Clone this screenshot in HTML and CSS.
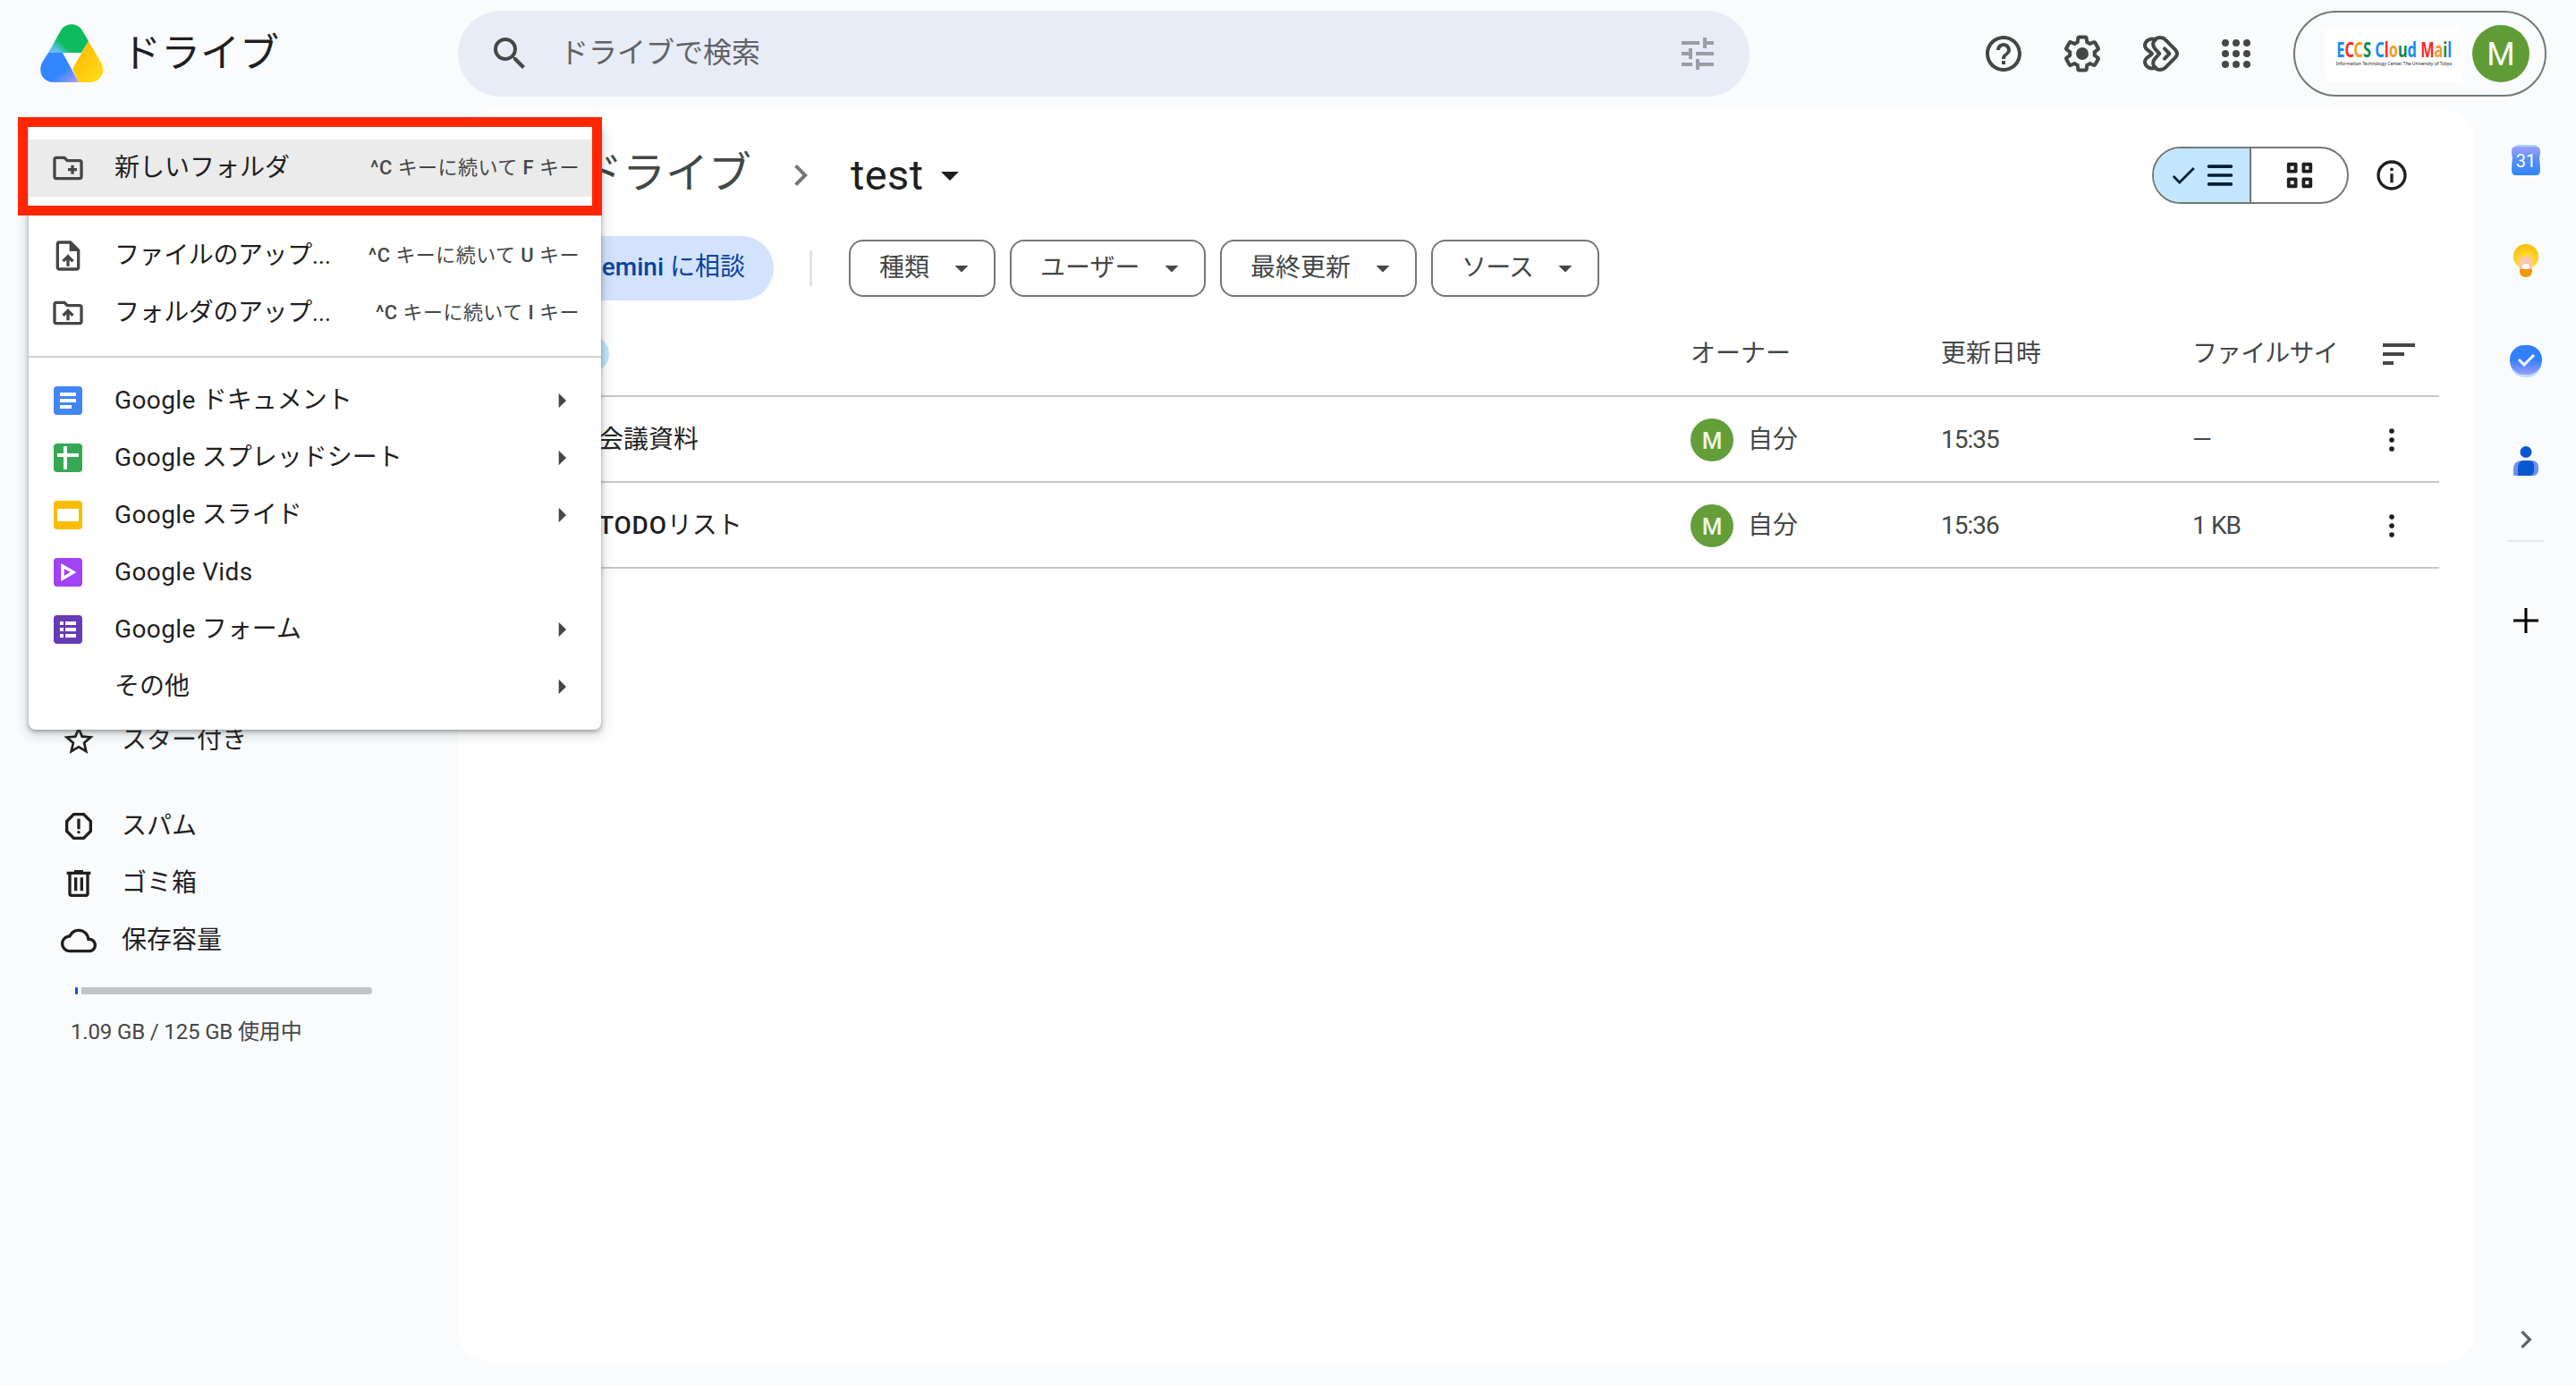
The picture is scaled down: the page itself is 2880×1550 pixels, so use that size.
FILE: index.html
```html
<!DOCTYPE html>
<html lang="ja">
<head>
<meta charset="UTF-8">
<title>test - ドライブ</title>
<link rel="stylesheet" href="styles.css">
</head>
<body>

<header class="topbar">
  <div class="brand">
    <svg class="brand-logo" viewBox="0 0 70 66">
      <defs>
        <linearGradient id="gBlue" x1="0" y1="0" x2="1" y2="1">
          <stop offset="0.6" stop-color="#3186ff"/>
          <stop offset="1" stop-color="#b0a0f5"/>
        </linearGradient>
        <linearGradient id="gGreen" x1="0" y1="1" x2="0.5" y2="0.6">
          <stop offset="0" stop-color="#6fb5ff"/>
          <stop offset="0.35" stop-color="#5cc0e8"/>
          <stop offset="0.75" stop-color="#0ebc5f"/>
        </linearGradient>
        <linearGradient id="gYellow" x1="0" y1="0" x2="1" y2="1">
          <stop offset="0.3" stop-color="#ffc107"/>
          <stop offset="1" stop-color="#ffdf1c"/>
        </linearGradient>
      </defs>
      <path fill="url(#gGreen)" d="M9 32 23 7C28-2 42-2 47 7L54 19 46 32z"/>
      <path fill="url(#gYellow)" d="M54 19 68 43C74 54 67 65 55 65H43L36 50z"/>
      <path fill="url(#gBlue)" d="M9 32H25L43 65H15C3 65-3 54 2 43z"/>
    </svg>
    <span class="brand-name">ドライブ</span>
  </div>

  <div class="search">
    <svg class="icon48 dark" viewBox="0 0 24 24"><path d="M15.5 14h-.79l-.28-.27A6.471 6.471 0 0 0 16 9.5 6.5 6.5 0 1 0 9.500 16c1.610 0 3.090-.59 4.230-1.570l.27.28v.79l5 4.990L20.490 19l-4.990-5zm-6 0C7.010 14 5 11.990 5 9.500S7.010 5 9.500 5 14 7.010 14 9.500 11.990 14 9.500 14z"/></svg>
    <span class="search-hint">ドライブで検索</span>
    <svg class="icon48 faded" viewBox="0 0 24 24"><path d="M3 17v2h6v-2H3zM3 5v2h10V5H3zm10 16v-2h8v-2h-8v-2h-2v6h2zM7 9v2H3v2h4v2h2V9H7zm14 4v-2H11v2h10zm-6-4h2V7h4V5h-4V3h-2v6z"/></svg>
  </div>

  <div class="tools">
    <svg class="icon48 dark" viewBox="0 0 24 24"><path d="M11 18h2v-2h-2v2zm1-16C6.480 2 2 6.480 2 12s4.480 10 10 10 10-4.480 10-10S17.520 2 12 2zm0 18c-4.410 0-8-3.590-8-8s3.590-8 8-8 8 3.590 8 8-3.590 8-8 8zm0-14c-2.210 0-4 1.790-4 4h2c0-1.100.9-2 2-2s2 .9 2 2c0 2-3 1.750-3 5h2c0-2.250 3-2.500 3-5 0-2.210-1.790-4-4-4z"/></svg>
    <svg class="icon48 dark" viewBox="0 0 24 24"><path d="M13.850 22.250h-3.700c-.74 0-1.360-.54-1.450-1.270l-.27-1.890c-.27-.14-.53-.29-.79-.46l-1.800.72c-.7.26-1.470-.03-1.810-.65L2.200 15.530c-.35-.66-.2-1.440.36-1.880l1.530-1.190c-.01-.15-.02-.3-.02-.46 0-.15.01-.31.02-.46l-1.520-1.190c-.59-.45-.74-1.260-.37-1.880l1.850-3.190c.34-.62 1.110-.9 1.790-.63l1.810.73c.26-.17.52-.32.78-.46l.27-1.910c.09-.7.71-1.250 1.440-1.250h3.700c.74 0 1.360.54 1.450 1.270l.27 1.890c.27.14.53.29.79.46l1.800-.72c.71-.26 1.480.03 1.820.65l1.840 3.180c.36.66.2 1.440-.36 1.880l-1.520 1.190c.01.15.02.3.02.46s-.01.31-.02.46l1.520 1.190c.56.45.72 1.230.37 1.860l-1.860 3.220c-.34.62-1.110.9-1.800.63l-1.800-.72c-.26.17-.52.32-.78.46l-.27 1.910c-.1.68-.72 1.220-1.460 1.220zm-3.230-2h2.760l.37-2.550.53-.22c.44-.18.88-.44 1.340-.78l.45-.34 2.380.96 1.380-2.400-2.030-1.580.07-.56c.03-.26.06-.51.06-.78s-.03-.53-.06-.78l-.07-.56 2.030-1.580-1.390-2.400-2.390.96-.45-.35c-.42-.32-.87-.58-1.330-.77l-.52-.22-.37-2.550h-2.760l-.37 2.550-.53.21c-.44.19-.88.44-1.340.79l-.45.33-2.380-.95-1.390 2.390 2.030 1.580-.07.56a7 7 0 0 0-.06.79c0 .26.02.53.06.78l.07.56-2.030 1.580 1.380 2.400 2.390-.96.45.35c.43.33.86.58 1.330.77l.53.22.38 2.550z"/><circle cx="12" cy="12" r="3.500"/></svg>
    <svg class="icon48 line" viewBox="0 0 24 24"><path d="M8.700 9.300C6.200 6.300 8.500 3 11.500 3c1.400 0 2.300.5 3.200 1.400l5.300 5.400c1.300 1.400 1.300 3 0 4.400l-5.300 5.400c-.9.900-1.800 1.400-3.200 1.400-3 0-5.300-3.300-2.800-6.300l2.500-2.700z"/><path d="M9 4.200C6 2.800 3 5 3 7.500c0 2.400 2.800 2.800 4 4.500-1.200 1.700-4 2.100-4 4.500 0 2.500 3 4.700 6 3.300M14 9.200 16.700 12 14 14.800"/></svg>
    <svg class="icon48 dark" viewBox="0 0 24 24"><circle cx="6" cy="6" r="2"/><circle cx="12" cy="6" r="2"/><circle cx="18" cy="6" r="2"/><circle cx="6" cy="12" r="2"/><circle cx="12" cy="12" r="2"/><circle cx="18" cy="12" r="2"/><circle cx="6" cy="18" r="2"/><circle cx="12" cy="18" r="2"/><circle cx="18" cy="18" r="2"/></svg>
  </div>

  <div class="account">
    <div class="org">
      <div class="org-name"><span class="b">E</span><span class="r">C</span><span class="o">C</span><span class="g">S</span> <span class="b">C</span><span class="r">l</span><span class="o">o</span><span class="g">u</span><span class="b">d</span> <span class="r">M</span><span class="o">a</span><span class="g">i</span><span class="b">l</span></div>
      <div class="org-sub">Information Technology Center, The University of Tokyo</div>
    </div>
    <div class="avatar">M</div>
  </div>
</header>

<div class="layout">
  <nav class="sidebar">
    <a class="nav-item"><svg class="icon40" viewBox="0 0 24 24"><path d="M22 9.240l-7.190-.62L12 2 9.190 8.630 2 9.240l5.460 4.730L5.820 21 12 17.270 18.180 21l-1.630-7.030L22 9.240zM12 15.400l-3.760 2.270 1-4.280-3.320-2.880 4.380-.38L12 6.100l1.710 4.040 4.380.38-3.320 2.880 1 4.280L12 15.400z"/></svg>スター付き</a>
    <a class="nav-item gap"><svg class="icon40" viewBox="0 0 24 24"><path d="M15.730 3H8.270L3 8.270v7.460L8.270 21h7.460L21 15.730V8.270L15.730 3zM19 14.900 14.900 19H9.100L5 14.900V9.100L9.100 5h5.800L19 9.100v5.800z"/><circle cx="12" cy="16" r="1"/><path d="M11 7h2v7h-2z"/></svg>スパム</a>
    <a class="nav-item"><svg class="icon40" viewBox="0 0 24 24"><path d="M15 4V3H9v1H4v2h1v13c0 1.100.9 2 2 2h10c1.100 0 2-.9 2-2V6h1V4h-5zm2 15H7V6h10v13zM9 8h2v9H9zm4 0h2v9h-2z"/></svg>ゴミ箱</a>
    <a class="nav-item"><svg class="icon40" viewBox="0 0 24 24"><path d="M19.350 10.040C18.670 6.590 15.640 4 12 4 9.110 4 6.600 5.640 5.350 8.040 2.340 8.360 0 10.910 0 14c0 3.310 2.690 6 6 6h13c2.760 0 5-2.240 5-5 0-2.640-2.050-4.780-4.650-4.960zM19 18H6c-2.210 0-4-1.790-4-4 0-2.050 1.530-3.760 3.560-3.970l1.070-.11.5-.95C8.080 7.140 9.940 6 12 6c2.620 0 4.880 1.860 5.390 4.430l.3 1.500 1.530.11c1.560.1 2.780 1.410 2.780 2.960 0 1.650-1.350 3-3 3z"/></svg>保存容量</a>
    <div class="storage-bar"><span class="used"></span><span class="free"></span></div>
    <div class="storage-text">1.09 GB / 125 GB 使用中</div>
  </nav>

  <main class="panel">
    <div class="crumbs">
      <span class="crumb">マイドライブ</span>
      <svg class="icon48 chevron" viewBox="0 0 24 24"><path d="M10 6 8.590 7.410 13.170 12l-4.580 4.590L10 18l6-6z"/></svg>
      <span class="crumb current">test</span>
      <svg class="icon48" viewBox="0 0 24 24"><path d="M7 10l5 5 5-5z"/></svg>
      <div class="view-toggle">
        <div class="view active">
          <svg class="icon40" viewBox="0 0 24 24"><path d="M9 16.170 4.830 12l-1.420 1.410L9 19 21 7l-1.410-1.410z"/></svg>
          <svg class="icon40" viewBox="0 0 24 24"><rect x="3.500" y="5" width="17" height="2.200" rx="1"/><rect x="3.500" y="10.900" width="17" height="2.200" rx="1"/><rect x="3.500" y="16.800" width="17" height="2.200" rx="1"/></svg>
        </div>
        <div class="view">
          <svg class="icon40" viewBox="0 0 24 24"><path fill-rule="evenodd" d="M4.500 3.500h5q1 0 1 1v5q0 1-1 1h-5q-1 0-1-1v-5q0-1 1-1zm1.300 2.300v2.400h2.400V5.800zM14.500 3.500h5q1 0 1 1v5q0 1-1 1h-5q-1 0-1-1v-5q0-1 1-1zm1.300 2.300v2.400h2.400V5.800zM4.500 13.500h5q1 0 1 1v5q0 1-1 1h-5q-1 0-1-1v-5q0-1 1-1zm1.300 2.300v2.400h2.400v-2.400zM14.500 13.500h5q1 0 1 1v5q0 1-1 1h-5q-1 0-1-1v-5q0-1 1-1zm1.300 2.300v2.400h2.400v-2.400z"/></svg>
        </div>
      </div>
      <svg class="icon40 info" viewBox="0 0 24 24"><path d="M11 7h2v2h-2zm0 4h2v6h-2zm1-9C6.480 2 2 6.480 2 12s4.480 10 10 10 10-4.480 10-10S17.520 2 12 2zm0 18c-4.410 0-8-3.590-8-8s3.590-8 8-8 8 3.590 8 8-3.590 8-8 8z"/></svg>
    </div>

    <div class="filters">
      <div class="gemini"><b>Gemini</b> に相談</div>
      <div class="filter-sep"></div>
      <div class="chip w-type">種類<svg class="icon36" viewBox="0 0 24 24"><path d="M7 10l5 5 5-5z"/></svg></div>
      <div class="chip w-user">ユーザー<svg class="icon36" viewBox="0 0 24 24"><path d="M7 10l5 5 5-5z"/></svg></div>
      <div class="chip w-date">最終更新<svg class="icon36" viewBox="0 0 24 24"><path d="M7 10l5 5 5-5z"/></svg></div>
      <div class="chip w-source">ソース<svg class="icon36" viewBox="0 0 24 24"><path d="M7 10l5 5 5-5z"/></svg></div>
    </div>

    <div class="files">
      <div class="row head">
        <div class="name"><span class="sort-dot"></span></div>
        <div>オーナー</div>
        <div>更新日時</div>
        <div class="tight">ファイルサイ</div>
        <div class="act sort"><svg class="icon48" viewBox="0 0 24 24"><path d="M3 18h6v-2H3v2zM3 6v2h18V6H3zm0 7h12v-2H3v2z"/></svg></div>
      </div>
      <div class="row">
        <div class="name">会議資料</div>
        <div class="owner"><span class="owner-pic">M</span>自分</div>
        <div class="time">15:35</div>
        <div>—</div>
        <div class="act"><svg class="icon40" viewBox="0 0 24 24"><circle cx="12" cy="6" r="1.700"/><circle cx="12" cy="12" r="1.700"/><circle cx="12" cy="18" r="1.700"/></svg></div>
      </div>
      <div class="row">
        <div class="name"><b>TODO</b>リスト</div>
        <div class="owner"><span class="owner-pic">M</span>自分</div>
        <div class="time">15:36</div>
        <div class="tight">1 KB</div>
        <div class="act"><svg class="icon40" viewBox="0 0 24 24"><circle cx="12" cy="6" r="1.700"/><circle cx="12" cy="12" r="1.700"/><circle cx="12" cy="18" r="1.700"/></svg></div>
      </div>
    </div>
  </main>

  <aside class="rail">
    <svg class="icon40" viewBox="0 0 40 40">
      <defs><linearGradient id="gCal" x1="0" y1="0" x2="0" y2="1"><stop offset="0" stop-color="#9f9ffb"/><stop offset="0.4" stop-color="#5a90fb"/><stop offset="1" stop-color="#2f86ff"/></linearGradient></defs>
      <rect x="6" y="2" width="28" height="10" rx="5" fill="#a9d5ff"/>
      <path fill="url(#gCal)" d="M9 4h22q5 0 5 5 0 4-1 8 1 6 1 13 0 6-5 6H9q-5 0-5-6 0-7 1-13-1-4-1-8 0-5 5-5z"/>
      <text class="cal-day" x="20" y="27" text-anchor="middle">31</text>
    </svg>
    <svg class="icon40" viewBox="0 0 40 40">
      <defs><radialGradient id="gKeep" cx="0.5" cy="0.75" r="0.75"><stop offset="0" stop-color="#ffe070"/><stop offset="0.5" stop-color="#ffd62e"/><stop offset="1" stop-color="#fbb904"/></radialGradient></defs>
      <circle cx="20" cy="15" r="14" fill="url(#gKeep)"/>
      <path fill="#fdc3b4" d="M13 20q0-5 7-5t7 5v9H13z"/>
      <ellipse cx="20" cy="26" rx="4" ry="3" fill="#fff"/>
      <path fill="#f29900" d="M13 29h14v2q0 7-7 7t-7-7z"/>
    </svg>
    <svg class="icon40" viewBox="0 0 40 40">
      <defs><linearGradient id="gTask" x1="0" y1="0" x2="0" y2="1"><stop offset="0.5" stop-color="#3180ff"/><stop offset="1" stop-color="#9a9cf5"/></linearGradient></defs>
      <rect x="3" y="8" width="34" height="30" rx="15" fill="#b9e0ff"/>
      <rect x="2" y="2" width="36" height="33" rx="16" fill="url(#gTask)"/>
      <path d="M12 18l6 6 11-11" fill="none" stroke="#fff" stroke-width="3"/>
    </svg>
    <svg class="icon40" viewBox="0 0 40 40">
      <path fill="#6d8ff5" d="M16 19h10q8 0 8 8v2q0 7-6 7H8q-2 0-2-2v-5q0-10 10-10z"/>
      <path fill="#0b57d0" d="M18 19h5q6 0 6 6v5q0 6-6 6H11v-8q0-9 7-9z"/>
      <circle cx="20" cy="9.500" r="6.500" fill="#0b57d0"/>
    </svg>
    <div class="rail-sep"></div>
    <svg class="icon40 plus" viewBox="0 0 40 40"><path d="M18.500 6h3v12.500H34v3H21.500V34h-3V21.500H6v-3h12.500z"/></svg>
    <svg class="icon40 collapse" viewBox="0 0 24 24"><path d="M10 6 8.590 7.410 13.170 12l-4.580 4.590L10 18l6-6z"/></svg>
  </aside>
</div>

<!-- "New" menu, opened over the sidebar -->
<div class="menu">
  <div class="menu-item hover">
    <svg class="icon40" viewBox="0 0 24 24"><path d="M20 6h-8l-2-2H4c-1.110 0-1.990.89-1.990 2L2 18c0 1.110.89 2 2 2h16c1.110 0 2-.89 2-2V8c0-1.110-.89-2-2-2zm0 12H4V6h5.170l2 2H20v10zm-8-4h2v2h2v-2h2v-2h-2v-2h-2v2h-2z"/></svg>
    <span class="label">新しいフォルダ</span><span class="keys"><b>^C</b> キーに続いて <b>F</b> キー</span>
  </div>
  <div class="menu-line"></div>
  <div class="menu-item">
    <svg class="icon40" viewBox="0 0 24 24"><path d="M14 2H6c-1.100 0-1.990.9-1.990 2L4 20c0 1.100.89 2 1.990 2H18c1.100 0 2-.9 2-2V8l-6-6zm4 18H6V4h7v5h5v11zM8 15.010l1.410 1.410L11 14.840V19h2v-4.160l1.590 1.590L16 15.010 12.010 11z"/></svg>
    <span class="label cut">ファイルのアップ...</span><span class="keys"><b>^C</b> キーに続いて <b>U</b> キー</span>
  </div>
  <div class="menu-item">
    <svg class="icon40" viewBox="0 0 24 24"><path d="M20 6h-8l-2-2H4c-1.100 0-1.990.9-1.990 2L2 18c0 1.100.9 2 2 2h16c1.100 0 2-.9 2-2V8c0-1.100-.9-2-2-2zm0 12H4V6h5.170l2 2H20v10zM9.410 14.420 11 12.840V17h2v-4.160l1.590 1.590L16 13.010 12.010 9 8 13.010z"/></svg>
    <span class="label cut">フォルダのアップ...</span><span class="keys"><b>^C</b> キーに続いて <b>I</b> キー</span>
  </div>
  <div class="menu-line"></div>
  <div class="menu-item">
    <svg class="icon40" viewBox="0 0 40 40"><rect x="4" y="4" width="32" height="32" rx="4" fill="#4285f4"/><path fill="#fff" d="M11 11h18v4H11zm0 7h18v4H11zm0 7h13v4H11z"/></svg>
    <span class="label"><i>Google</i> ドキュメント</span><svg class="icon40 sub" viewBox="0 0 24 24"><path d="M10 17l5-5-5-5z"/></svg>
  </div>
  <div class="menu-item">
    <svg class="icon40" viewBox="0 0 40 40"><rect x="4" y="4" width="32" height="32" rx="4" fill="#34a853"/><path fill="#fff" d="M15 7h4v8h13v4H19v14h-4V19H8v-4h7z"/></svg>
    <span class="label"><i>Google</i> スプレッドシート</span><svg class="icon40 sub" viewBox="0 0 24 24"><path d="M10 17l5-5-5-5z"/></svg>
  </div>
  <div class="menu-item">
    <svg class="icon40" viewBox="0 0 40 40"><rect x="4" y="4" width="32" height="32" rx="4" fill="#fbbc04"/><path fill="#fff" d="M8 13h24v14H8z"/></svg>
    <span class="label"><i>Google</i> スライド</span><svg class="icon40 sub" viewBox="0 0 24 24"><path d="M10 17l5-5-5-5z"/></svg>
  </div>
  <div class="menu-item">
    <svg class="icon40" viewBox="0 0 40 40"><rect x="4" y="4" width="32" height="32" rx="4" fill="#a142f4"/><path fill="none" stroke="#fff" stroke-width="3.500" d="M14 13v14l12-7z"/></svg>
    <span class="label"><i>Google Vids</i></span>
  </div>
  <div class="menu-item">
    <svg class="icon40" viewBox="0 0 40 40"><rect x="4" y="4" width="32" height="32" rx="4" fill="#673ab7"/><path fill="#fff" d="M11 11h4v4h-4zm6 0h12v4H17zm-6 7h4v4h-4zm6 0h12v4H17zm-6 7h4v4h-4zm6 0h12v4H17z"/></svg>
    <span class="label"><i>Google</i> フォーム</span><svg class="icon40 sub" viewBox="0 0 24 24"><path d="M10 17l5-5-5-5z"/></svg>
  </div>
  <div class="menu-item">
    <span class="icon40"></span>
    <span class="label">その他</span><svg class="icon40 sub" viewBox="0 0 24 24"><path d="M10 17l5-5-5-5z"/></svg>
  </div>
</div>
<div class="marker"></div>

</body>
</html>
```
FILE: styles.css
```css
* {
  box-sizing: border-box;
}
body {
  margin: 0;
  width: 2880px;
  height: 1550px;
  overflow: hidden;
  position: relative;
  background: #f9fbfd;
  color: #1f1f1f;
  font-family: Roboto, "Noto Sans CJK JP", sans-serif;
  font-size: 28px;
  line-height: 40px;
  white-space: nowrap;
}
b {
  font-weight: 500;
}
svg {
  display: block;
  fill: currentColor;
}
.icon36, .icon40, .icon48 {
  flex: none;
}
.icon36 { width: 36px; height: 36px; }
.icon40 { width: 40px; height: 40px; }
.icon48 { width: 48px; height: 48px; }
.dark { color: #444746; }
.faded { color: #9b9da3; }
.line {
  fill: none;
  stroke: #444746;
  stroke-width: 2;
  stroke-linejoin: round;
  stroke-linecap: round;
}

/* top bar */
.topbar {
  height: 120px;
  display: flex;
  align-items: center;
}
.brand {
  width: 512px;
  padding-left: 45px;
  display: flex;
  align-items: center;
}
.brand-logo {
  width: 70px;
  height: 66px;
}
.brand-name {
  margin-left: 21px;
  font-size: 44px;
}
.search {
  width: 1444px;
  height: 96px;
  padding: 0 34px;
  border-radius: 48px;
  background: #e8ecf6;
  display: flex;
  align-items: center;
}
.search-hint {
  flex: 1;
  padding: 0 0 3px 32px;
  font-size: 32px;
  color: #5f6368;
}
.tools {
  margin-left: 260px;
  display: flex;
  gap: 40px;
}
.tools svg:last-child {
  margin-left: -4px;
}
.account {
  margin-left: 40px;
  width: 283px;
  height: 96px;
  padding-left: 33px;
  border: 2px solid #747775;
  border-radius: 48px;
  display: flex;
  align-items: center;
}
.org {
  width: 155px;
  height: 64px;
  border-radius: 8px;
  background: #fff;
  display: flex;
  flex-direction: column;
  align-items: center;
  justify-content: center;
}
.org-name {
  font: bold 23px/22px "Noto Sans", sans-serif;
  transform: scaleX(0.71);
}
.org-name .b { color: #1a8cf0; }
.org-name .r { color: #f22c2c; }
.org-name .o { color: #f59a2c; }
.org-name .g { color: #0f8a4a; }
.org-sub {
  font: 5px/10px "Noto Sans", sans-serif;
  color: #222;
}
.avatar {
  width: 64px;
  height: 64px;
  margin-left: 10px;
  border-radius: 50%;
  background: #5f9c35;
  color: #fff;
  font-size: 36px;
  line-height: 66px;
  text-align: center;
}

/* page body */
.layout {
  height: 1430px;
  padding: 4px 0 28px;
  display: flex;
}
.sidebar {
  width: 512px;
  padding-top: 672px;
}
.nav-item {
  height: 64px;
  padding: 0 0 0 68px;
  display: flex;
  align-items: center;
  gap: 28px;
}
.nav-item.gap {
  margin-top: 32px;
}
.storage-bar {
  display: flex;
  gap: 4px;
  margin: 20px 0 0 84px;
}
.storage-bar span {
  height: 8px;
}
.storage-bar .used {
  width: 3px;
  border-radius: 1px;
  background: #0b57d0;
}
.storage-bar .free {
  width: 325px;
  border-radius: 0 4px 4px 0;
  background: #c1c3c7;
}
.storage-text {
  margin: 22px 0 0 79px;
  font-size: 24px;
  letter-spacing: -0.15px;
  color: #444746;
}
.panel {
  width: 2255px;
  padding: 0 40px;
  border-radius: 32px;
  background: #fff;
}
.crumbs {
  height: 144px;
  display: flex;
  align-items: center;
}
.crumb {
  font-size: 48px;
  padding-bottom: 4px;
  color: #444746;
}
.chevron {
  margin: 0 32px 0 31px;
  color: #747775;
}
.crumb.current {
  font-size: 47px;
  padding: 0;
  letter-spacing: 0.4px;
  color: #1f1f1f;
}
.current + svg {
  margin-left: 5px;
}
.view-toggle {
  margin-left: auto;
  width: 220px;
  height: 64px;
  border: 2px solid #747775;
  border-radius: 32px;
  display: flex;
  overflow: hidden;
}
.view {
  flex: 1;
  display: flex;
  align-items: center;
  justify-content: center;
}
.view.active {
  background: #c2e7ff;
  border-right: 2px solid #747775;
  color: #001d35;
}
.view.active svg:first-child {
  width: 34px;
  margin: 0 4px 0 2px;
}
.info {
  margin: 0 33px 0 28px;
}
.filters {
  height: 64px;
  display: flex;
  align-items: center;
}
.gemini {
  width: 313px;
  height: 72px;
  padding-right: 32px;
  border-radius: 36px;
  background: #d3e3fd;
  color: #0842a0;
  line-height: 70px;
  text-align: right;
}
.filter-sep {
  width: 3px;
  height: 40px;
  margin: 0 41px 0 40px;
  background: #e1e2e4;
}
.chip {
  height: 64px;
  margin-right: 16px;
  padding: 0 18px 0 32px;
  border: 2px solid #747775;
  border-radius: 16px;
  display: flex;
  align-items: center;
  justify-content: space-between;
  color: #444746;
}
.w-type { width: 164px; }
.w-user { width: 219px; }
.w-date { width: 220px; }
.w-source {
  width: 188px;
  letter-spacing: -0.8px;
}

/* file list */
.files {
  margin-top: 16px;
}
.row {
  height: 96px;
  padding-top: 2px;
  border-bottom: 2px solid #c7c7c7;
  display: grid;
  grid-template-columns: 1338px 280px 281px 168px 1fr;
  align-items: center;
  color: #444746;
}
.tight {
  letter-spacing: -0.9px;
}
.time {
  letter-spacing: -1px;
}
.name {
  padding-left: 117px;
  color: #1f1f1f;
}
.name b {
  letter-spacing: 0.8px;
}
.sort-dot {
  display: block;
  width: 40px;
  height: 40px;
  margin-left: -28px;
  border-radius: 50%;
  background: #c2e7ff;
}
.owner {
  display: flex;
  align-items: center;
  gap: 16px;
}
.owner-pic {
  width: 48px;
  height: 48px;
  border-radius: 50%;
  background: #639e38;
  color: #f0f5e8;
  font-size: 26px;
  font-weight: 500;
  line-height: 50px;
  text-align: center;
}
.act {
  display: flex;
  justify-content: center;
  padding-left: 2px;
  color: #1f1f1f;
}
.act.sort {
  padding-left: 17px;
  color: #444746;
}

/* right rail */
.rail {
  flex: 1;
  padding-top: 36px;
  display: flex;
  flex-direction: column;
  align-items: center;
  gap: 72px;
}
.cal-day {
  fill: #fff;
  font-size: 20px;
}
.rail-sep {
  width: 40px;
  height: 2px;
  margin-top: -4px;
  background: #e4e6e8;
}
.plus {
  margin-top: -4px;
  color: #000;
}
.collapse {
  margin: auto 0 4px;
  color: #5f6368;
}

/* menu */
.menu {
  position: absolute;
  left: 32px;
  top: 140px;
  width: 640px;
  padding: 16px 0;
  border-radius: 8px;
  background: #fff;
  box-shadow: 0 4px 12px 4px rgba(60,64,67,0.15), 0 2px 5px rgba(60,64,67,0.45);
}
.menu-item {
  height: 64px;
  padding: 0 24px;
  display: flex;
  align-items: center;
}
.menu-item.hover {
  background: #ebebeb;
}
.menu-item > .icon40 {
  color: #444746;
}
.menu-item .label {
  flex: 1;
  margin-left: 32px;
}
.label i {
  font-style: normal;
  letter-spacing: 0.4px;
}
.label.cut {
  letter-spacing: -0.4px;
}
.keys {
  font-size: 22px;
  letter-spacing: 0.45px;
  color: #444746;
}
.menu-line {
  height: 2px;
  margin: 16px 0;
  background: #d0d2d3;
}
.marker {
  position: absolute;
  left: 20px;
  top: 131px;
  width: 653px;
  height: 110px;
  border: 11px solid #ff2600;
}
```
